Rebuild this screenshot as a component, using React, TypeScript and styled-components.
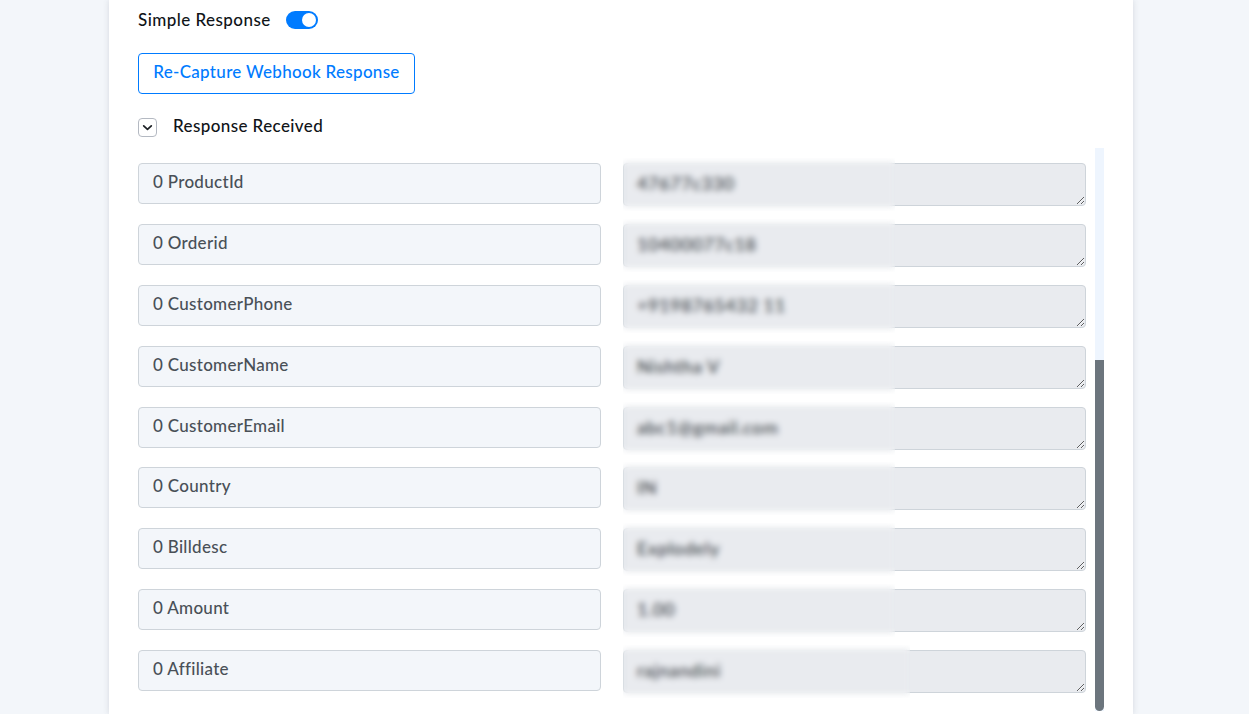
import React from "react";
import styled, { createGlobalStyle } from "styled-components";

const Global = createGlobalStyle`
  html, body { margin: 0; padding: 0; height: 714px; overflow: hidden; background: #f3f6fa; }
  body { font-family: "Lato", "Noto Sans", sans-serif; }
`;

const Card = styled.main`
  box-sizing: border-box;
  width: 1024px;
  height: 714px;
  margin-left: 109px;
  padding: 9px 29px 0;
  background: #fff;
  box-shadow: 0 0 6px rgba(60, 70, 90, 0.16);
  display: flex;
  flex-direction: column;
  align-items: flex-start;
`;

const SwitchRow = styled.div`
  display: flex;
  align-items: center;
  gap: 15px;
  height: 22px;
  font-size: 17px;
  font-weight: 500;
  letter-spacing: 0.45px;
  color: #101418;
`;

const SwitchLabel = styled.span`
  margin-bottom: 2px;
`;

const Switch = styled.span`
  position: relative;
  display: block;
  width: 32px;
  height: 18px;
  border-radius: 9px;
  background: #007bff;
  &::after {
    content: "";
    position: absolute;
    right: 2px;
    top: 2px;
    width: 14px;
    height: 14px;
    border-radius: 50%;
    background: #fff;
  }
`;

const CaptureButton = styled.button`
  box-sizing: border-box;
  width: 277px;
  height: 41px;
  margin-top: 22px;
  padding: 0 0 5px;
  font: 500 17px "Lato", "Noto Sans", sans-serif;
  letter-spacing: 0.3px;
  color: #007bff;
  background: #fff;
  border: 1px solid #007bff;
  border-radius: 4px;
`;

const ExpandRow = styled.div`
  display: flex;
  align-items: center;
  gap: 16px;
  height: 20px;
  margin-top: 23px;
  font-size: 17px;
  font-weight: 500;
  letter-spacing: 0.4px;
  color: #101418;
`;

const ExpandLabel = styled.span`
  margin-bottom: 4px;
`;

const ExpandBox = styled.span`
  box-sizing: border-box;
  width: 19px;
  height: 19px;
  display: flex;
  align-items: center;
  justify-content: center;
  border: 1px solid #b4b9c2;
  border-radius: 4px;
  background: #fff;
`;

const ScrollArea = styled.div`
  display: flex;
  gap: 9px;
  height: 563px;
  margin-top: 11px;
  overflow: hidden;
`;

const List = styled.div`
  padding-top: 15px;
  display: flex;
  flex-direction: column;
  gap: 17.875px;
`;

const Row = styled.div`
  display: grid;
  grid-template-columns: 463px 463px;
  column-gap: 22px;
  align-items: start;
`;

const KeyInput = styled.input`
  box-sizing: border-box;
  width: 463px;
  height: 41px;
  padding: 0 14px 4px;
  font: 500 17px "Lato", "Noto Sans", sans-serif;
  letter-spacing: 0.3px;
  color: #495057;
  background: #f3f6fa;
  border: 1px solid #ced4da;
  border-radius: 4px;
  outline: none;
`;

const ValueCell = styled.div`
  position: relative;
  height: 43px;
`;

const ValueArea = styled.textarea`
  display: block;
  box-sizing: border-box;
  width: 463px;
  height: 43px;
  padding: 8px 13px;
  font: 500 18px "Lato", "Noto Sans", sans-serif;
  letter-spacing: 0.6px;
  color: #343a40;
  background: #e9ebef;
  border: 1px solid #ced4da;
  border-radius: 4px;
  resize: vertical;
  outline: none;
`;

const BlurPatch = styled.div<{ $w: number }>`
  position: absolute;
  left: 0;
  top: -5px;
  bottom: -5px;
  width: ${(p) => p.$w}px;
  backdrop-filter: blur(3px);
`;

const Track = styled.div`
  width: 9px;
  height: 563px;
  background: #eef5fe;
  display: flex;
  flex-direction: column;
  justify-content: flex-end;
`;

const Thumb = styled.div`
  height: 351px;
  background: #6c757d;
  border-radius: 0 0 5px 5px;
`;

const rows: [string, string, number][] = [
  ["0 ProductId", "47677c330", 272],
  ["0 Orderid", "10400077c18", 272],
  ["0 CustomerPhone", "+9198765432 11", 272],
  ["0 CustomerName", "Nishtha V", 272],
  ["0 CustomerEmail", "abc1@gmail.com", 272],
  ["0 Country", "IN", 272],
  ["0 Billdesc", "Explodely", 272],
  ["0 Amount", "1.00", 272],
  ["0 Affiliate", "rajnandini", 287],
];

export default function App() {
  return (
    <>
      <Global />
      <Card>
        <SwitchRow>
          <SwitchLabel>Simple Response</SwitchLabel>
          <Switch />
        </SwitchRow>
        <CaptureButton>Re-Capture Webhook Response</CaptureButton>
        <ExpandRow>
          <ExpandBox>
            <svg width="13" height="13" viewBox="0 0 13 13" fill="none" stroke="#1c2024" strokeWidth="1.7" strokeLinecap="round" strokeLinejoin="round">
              <path d="M2.7 4.8 6.5 8.4l3.8-3.6" />
            </svg>
          </ExpandBox>
          <ExpandLabel>Response Received</ExpandLabel>
        </ExpandRow>
        <ScrollArea>
          <List>
            {rows.map(([key, value, w]) => (
              <Row key={key}>
                <KeyInput readOnly value={key} />
                <ValueCell>
                  <ValueArea readOnly value={value} />
                  <BlurPatch $w={w} />
                </ValueCell>
              </Row>
            ))}
          </List>
          <Track>
            <Thumb />
          </Track>
        </ScrollArea>
      </Card>
    </>
  );
}
